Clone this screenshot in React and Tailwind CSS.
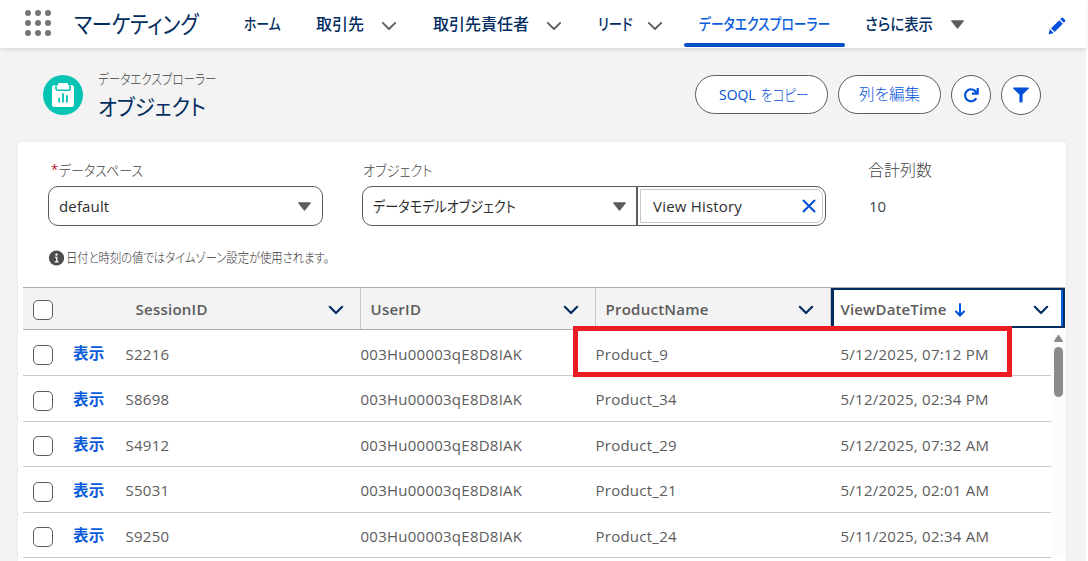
import React, { useState } from 'react';
import clsx from 'clsx';

const navItems = [
  { label: 'ホーム', box: 'w-[72px]', text: 'scale-x-[0.8]' },
  { label: '取引先', box: 'w-[66px]', menu: true },
  { label: '取引先責任者', box: 'w-[114px]', menu: true },
  { label: 'リード', box: 'w-[50px]', text: 'scale-x-[0.83]', menu: true },
];

const columns = [
  { key: 'userId', label: 'UserID' },
  { key: 'product', label: 'ProductName' },
];

const rows = [
  { session: 'S2216', userId: '003Hu00003qE8D8IAK', product: 'Product_9', viewed: '5/12/2025, 07:12 PM' },
  { session: 'S8698', userId: '003Hu00003qE8D8IAK', product: 'Product_34', viewed: '5/12/2025, 02:34 PM' },
  { session: 'S4912', userId: '003Hu00003qE8D8IAK', product: 'Product_29', viewed: '5/12/2025, 07:32 AM' },
  { session: 'S5031', userId: '003Hu00003qE8D8IAK', product: 'Product_21', viewed: '5/12/2025, 02:01 AM' },
  { session: 'S9250', userId: '003Hu00003qE8D8IAK', product: 'Product_24', viewed: '5/11/2025, 02:34 AM' },
];

const Narrow = ({ className, children }) => (
  <span className={clsx('inline-block origin-left whitespace-nowrap', className)}>{children}</span>
);

const Chevron = ({ className }) => (
  <svg viewBox="0 0 16 10" className={clsx('h-[10px] w-4 shrink-0', className)} fill="none" stroke="currentColor" strokeLinecap="round" strokeLinejoin="round">
    <path d="M1.8 1.8 8 8l6.2-6.2" />
  </svg>
);

const Caret = () => (
  <svg viewBox="0 0 13 9" className="h-[9px] w-[13px] shrink-0 text-[#5c5c5c]" fill="currentColor">
    <path d="M.8.3h11.4c.6 0 .8.5.5.9L7.2 8.3a.9.9 0 0 1-1.4 0L.3 1.2C0 .8.2.3.8.3z" />
  </svg>
);

const Checkbox = ({ className }) => (
  <span className={clsx('ml-[10px] block h-5 w-5 shrink-0 rounded-[5px] border border-[#5c5c5c] bg-white', className)} />
);

const Header = () => (
  <header className="relative z-10 flex h-12 items-center bg-white shadow-[0_2px_4px_rgba(0,0,0,0.1)]">
    <div className="-mt-0.5 ml-[25px] grid w-[26px] grid-cols-3 gap-1">
      {Array.from({ length: 9 }, (_, i) => (
        <span key={i} className="h-1.5 w-1.5 rounded-full bg-[#747474]" />
      ))}
    </div>
    <h1 className="ml-[23px] w-[170px] text-[24px] leading-none text-[#032d60]">
      <Narrow className="scale-x-[0.835]">マーケティング</Narrow>
    </h1>
    <nav className="flex h-full items-center text-[16px] font-medium text-[#032d60]">
      {navItems.map((item) => (
        <React.Fragment key={item.label}>
          <a className={clsx('shrink-0', item.box)}>
            <Narrow className={item.text}>{item.label}</Narrow>
          </a>
          {item.menu && <Chevron className="mr-[35px] mt-[3px] -translate-x-px stroke-[1.8] text-[#5c5c5c]" />}
        </React.Fragment>
      ))}
      <a className="relative -ml-[15px] flex h-full w-[161px] shrink-0 items-center pl-[15px] text-[#0b5cdb]">
        <Narrow className="scale-x-[0.8]">データエクスプローラー</Narrow>
        <span className="absolute bottom-[1px] left-0 h-1 w-full rounded-sm bg-[#0250c5]" />
      </a>
      <a className="ml-5 w-[86px] shrink-0">
        <Narrow className="scale-x-[0.9]">さらに表示</Narrow>
      </a>
      <Caret />
    </nav>
    <svg viewBox="0 0 52 52" className="ml-auto mr-[20px] mt-[3px] h-[18px] w-[18px] text-[#0250d9]" fill="currentColor">
      <path d="m9.500 33.400 8.900 8.900c.4.400 1 .4 1.400 0L42 20c.4-.4.4-1 0-1.400l-8.800-8.800c-.4-.4-1-.4-1.400 0L9.500 32.100c-.4.400-.4 1 0 1.300zM36.100 5.700c-.4.400-.4 1 0 1.400l8.800 8.800c.4.400 1 .4 1.400 0l2.500-2.500c1.600-1.500 1.600-3.900 0-5.500l-4.700-4.700c-1.600-1.600-4.100-1.600-5.700 0l-2.300 2.500zM2.100 48.200c-.2 1 .7 1.900 1.700 1.700l10.900-2.600c.4-.1.7-.3.9-.5l.2-.2c.2-.2.300-.9-.1-1.300l-9-9c-.4-.4-1.100-.3-1.300-.1l-.2.200c-.3.300-.4.600-.5.900L2.100 48.200z" />
    </svg>
  </header>
);

const PageTitle = () => (
  <div className="flex h-[94px] items-start pl-[43px] pr-[45px] pt-[27px]">
    <div className="flex h-10 w-10 items-center justify-center rounded-full bg-[#06c4b4]">
      <svg viewBox="0 0 22 24" className="h-6 w-[22px]" fill="none">
        <rect x="0" y="2" width="22" height="22" rx="2.500" fill="#fff" />
        <path d="M4 2v3.500a1.800 1.800 0 0 0 1.800 1.800h10.400A1.800 1.800 0 0 0 18 5.500V2" stroke="#06c4b4" strokeWidth="1.600" />
        <rect x="6" y="0" width="10" height="5" rx="1.200" fill="#fff" />
        <path d="M7.200 15.500v3.300M11 11v7.800M14.900 13v5.800" stroke="#06c4b4" strokeWidth="1.800" strokeLinecap="round" />
      </svg>
    </div>
    <div className="ml-[15px] w-[160px] whitespace-nowrap">
      <p className="-mt-[5px] text-[14px] font-light leading-[18px] text-[#444]">
        <Narrow className="scale-x-[0.825]">データエクスプローラー</Narrow>
      </p>
      <h2 className="mt-[3px] text-[22px] leading-[30px] text-[#032d60]">
        <Narrow className="scale-x-[0.93]">オブジェクト</Narrow>
      </h2>
    </div>
    <div className="ml-auto flex gap-[10px] text-[16px] font-light text-[#0250d9]">
      <button className="flex h-[39px] w-[133px] items-center whitespace-nowrap rounded-full border border-[#5c5c5c] bg-white pl-5">
        <span className="w-[45px] text-[15px] font-normal">
          <Narrow className="scale-x-[0.93]">SOQL</Narrow>
        </span>
        <Narrow className="scale-x-[0.78]">をコピー</Narrow>
      </button>
      <button className="h-[39px] w-[103px] whitespace-nowrap rounded-full border border-[#5c5c5c] bg-white pt-px text-[15.500px]">列を編集</button>
      <button className="flex h-10 w-10 items-center justify-center rounded-full border border-[#5c5c5c] bg-white">
        <svg viewBox="0 0 16 16" className="h-4 w-4" fill="none" stroke="currentColor" strokeWidth="2.200">
          <path d="M13.300 11.200A6 6 0 1 1 12.600 4.300l1.200 1.400" />
          <path d="M14.700 1v5.700H9" strokeLinejoin="round" />
        </svg>
      </button>
      <button className="flex h-10 w-10 items-center justify-center rounded-full border border-[#5c5c5c] bg-white">
        <svg viewBox="0 0 16 16" className="h-4 w-4" fill="currentColor">
          <path d="M.7.5h14.600c.6 0 .8.600.5 1L9.600 7.600v7c0 .5-.4.900-.9.900H7.300a.9.900 0 0 1-.9-.9v-7L.2 1.500C-.1 1.100.100.500.7.500z" />
        </svg>
      </button>
    </div>
  </div>
);

const Filters = () => (
  <div className="h-[145px] pl-[30px] pt-[18px] text-[#5c5c5c]">
    <div className="flex">
      <div className="w-[314px]">
        <label className="flex h-5 items-center whitespace-nowrap pl-[3px] text-[15px]">
          <span className="mr-px text-[13px] text-[#ba0517]">*</span>
          <Narrow className="scale-x-[0.865] font-light text-[#444]">データスペース</Narrow>
        </label>
        <div className="mt-[6px] flex h-10 w-[275px] items-center justify-between rounded-[10px] border border-[#5c5c5c] pl-[10px] pr-[11px] text-[15px] tracking-[0.15px] text-[#2e2e2e]">
          default
          <Caret />
        </div>
      </div>
      <div className="w-[506px]">
        <label className="flex h-5 items-center pl-px text-[15px] font-light text-[#444]">
          <Narrow className="scale-x-[0.88]">オブジェクト</Narrow>
        </label>
        <div className="mt-[6px] flex h-10 w-[464px] rounded-[10px] border border-[#5c5c5c] text-[15px] text-[#2e2e2e]">
          <div className="flex w-[275px] items-center border-r-2 border-[#5c5c5c] pl-[10px] pr-[10px]">
            <span className="w-[240px] shrink-0">
              <Narrow className="scale-x-[0.875]">データモデルオブジェクト</Narrow>
            </span>
            <Caret />
          </div>
          <div className="my-0.5 ml-0.5 mr-0.5 flex flex-1 items-center justify-between rounded-r-[7px] border border-[#c9c9c9] pl-3 pr-[6px] tracking-[0.2px]">
            View History
            <svg viewBox="0 0 14 14" className="h-[14px] w-[14px] text-[#0250d9]" fill="none" stroke="currentColor" strokeWidth="2" strokeLinecap="round">
              <path d="m1.500 1.500 11 11M12.500 1.500l-11 11" />
            </svg>
          </div>
        </div>
      </div>
      <div>
        <p className="flex h-5 items-center text-[16px] font-light text-[#444]">合計列数</p>
        <p className="mt-[6px] flex h-10 items-center pl-px text-[15px] text-[#444]">10</p>
      </div>
    </div>
    <div className="mt-[22px] flex h-5 items-center whitespace-nowrap text-[13px] font-light text-[#333]">
      <svg viewBox="0 0 16 16" className="mr-0.5 h-4 w-4 shrink-0" fill="none">
        <circle cx="8.500" cy="8" r="7.600" fill="#4d4d4d" />
        <circle cx="8.500" cy="4.600" r="1.200" fill="#fff" />
        <path d="M7 7.300h1.800v4M6.700 11.800h3.800" stroke="#fff" strokeWidth="1.300" />
      </svg>
      <Narrow className="scale-x-[0.87]">日付と時刻の値ではタイムゾーン設定が使用されます。</Narrow>
    </div>
  </div>
);

const Table = () => {
  const [checked] = useState(false);

  return (
    <div className="relative ml-[5px] text-[15px] tracking-[0.25px] text-[#5c5c5c]">
      <div className="flex h-[43.5px] w-[1042px] items-start border-t border-[#aeaeae] font-semibold">
        <div className="flex h-[42px] w-[338px] items-center border-b border-[#aeaeae] bg-[#f3f3f3]">
          <Checkbox className="mt-[3px]" />
          <span className="ml-[82.500px] flex-1 pt-px">SessionID</span>
          <Chevron className="mr-[16.500px] mt-0.5 stroke-[2.2] text-[#032d60]" />
          <span className="h-full w-px bg-[#c9c9c9]" />
        </div>
        {columns.map((c) => (
          <div key={c.key} className="flex h-[42px] w-[235px] items-center border-b border-[#aeaeae] bg-[#f3f3f3] pl-[9.500px]">
            <span className="flex-1 pt-px">{c.label}</span>
            <Chevron className="mr-[16.500px] mt-0.5 stroke-[2.2] text-[#032d60]" />
            <span className="h-full w-px bg-[#c9c9c9]" />
          </div>
        ))}
        <div className="flex h-[42px] w-[234px] items-start">
          <div className="flex h-10 w-full items-center border-2 border-l-[3px] border-[#032d60] bg-white pl-[6.500px]">
            <span className="pt-[3px] tracking-[0.15px]">ViewDateTime</span>
            <svg viewBox="0 0 10 14" className="ml-2 mt-[3px] h-[14px] w-[10px] text-[#0250d9]" fill="none" stroke="currentColor" strokeWidth="2" strokeLinecap="round">
              <path d="M5 1v11M1 8.500l4 4 4-4" />
            </svg>
            <Chevron className="ml-auto mr-[12px] mt-[3px] stroke-[2.2] text-[#032d60]" />
            <span className="h-full w-[2px] bg-[#0b5cdb]" />
          </div>
        </div>
      </div>

      <div className="flex">
        <div className="w-[1028px]">
          {rows.map((row) => (
            <div key={row.session} className="flex h-[45.500px] items-center border-b border-[#c9c9c9]">
              <Checkbox className={clsx('mt-[5px]', checked && 'bg-[#0250d9]')} />
              <a className="ml-5 w-[52.500px] pt-0.5 text-[15.500px] font-bold text-[#0b5cdb]">表示</a>
              <span className="w-[235px] pt-0.5">{row.session}</span>
              {columns.map((c) => (
                <span key={c.key} className="w-[235px] pt-0.5">{row[c.key]}</span>
              ))}
              <span className="ml-[10px] whitespace-nowrap pt-0.5">{row.viewed}</span>
            </div>
          ))}
        </div>
        <div className="flex w-[15px] flex-col items-center bg-[#fcfcfc] pt-1">
          <svg viewBox="0 0 9 7" className="h-[7px] w-[9px] text-[#8b8b8b]" fill="currentColor">
            <path d="M3.700.5a1 1 0 0 1 1.600 0l3.500 5.200c.3.500 0 1.300-.7 1.300H.9C.2 7-.1 6.200.2 5.700z" />
          </svg>
          <span className="mt-[5.500px] h-[50px] w-[9px] rounded-full bg-[#8b8b8b]" />
        </div>
      </div>

      {/* highlight over the latest view */}
      <div className="absolute left-[550px] top-[39px] h-[51px] w-[439px] border-[5px] border-[#ed1c24]" />
    </div>
  );
};

export default function App() {
  return (
    <div className="h-[561px] w-[1088px] overflow-hidden bg-white font-['Open_Sans','Noto_Sans_CJK_JP',sans-serif] [font-feature-settings:'palt']">
      <div className="h-full w-[1086px] bg-[#f3f3f3]">
        <Header />
        <PageTitle />
        <main className="ml-[18px] h-[419px] w-[1048px] overflow-hidden bg-white shadow-[0_0_2px_rgba(0,0,0,0.1)]">
          <Filters />
          <Table />
        </main>
      </div>
    </div>
  );
}
